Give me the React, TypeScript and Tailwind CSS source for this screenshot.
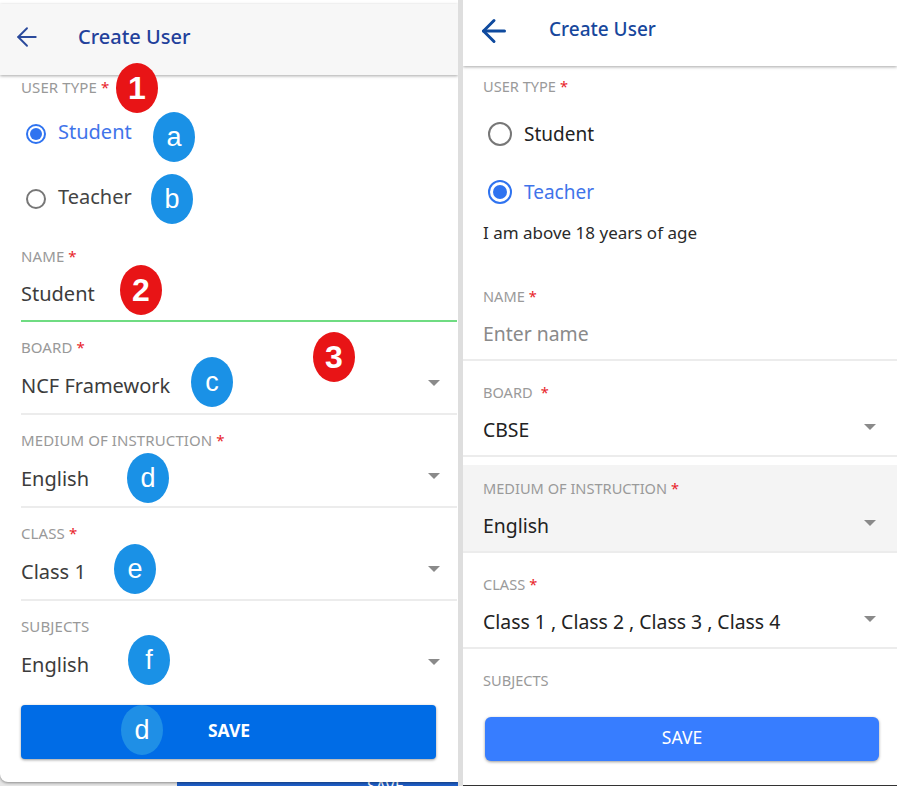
import { ArrowLeft } from "lucide-react";

function Star({ gap }: { gap?: boolean }) {
  return <span className={`text-[#e8232a] ${gap ? "ml-2" : "ml-1"}`}>*</span>;
}

function Radio({ on, size }: { on: boolean; size: "sm" | "lg" }) {
  const box = size === "sm" ? "w-5 h-5" : "w-6 h-6";
  const dot = size === "sm" ? "w-3 h-3" : "w-[14px] h-[14px]";
  const ring = on ? "border-[#2f73f0]" : "border-[#777777]";
  return (
    <span className={`${box} ${ring} rounded-full border-2 flex items-center justify-center bg-white shrink-0`}>
      {on && <span className={`${dot} rounded-full bg-[#2f73f0]`} />}
    </span>
  );
}

function Caret({ right }: { right: string }) {
  return (
    <span
      className={`absolute ${right} top-[6px] w-0 h-0 border-x-[6px] border-x-transparent border-t-[6px] border-t-[#8a8a8a]`}
    />
  );
}

function LeftField({ label, value, req = true }: { label: string; value: string; req?: boolean }) {
  return (
    <div className="h-[93px] pt-4 pb-4 ml-[21px] mr-px border-b-2 border-[#ececec]">
      <div className="text-[15px] leading-[18px] text-[#999999] tracking-[0.1px]">
        {label}
        {req && <Star />}
      </div>
      <div className="relative mt-[18px] h-6 text-[20px] leading-6 text-[#3c3c3c]">
        {value}
        <Caret right="right-[17px]" />
      </div>
    </div>
  );
}

function RightField({
  label,
  value,
  shaded,
  height,
  gap,
}: {
  label: string;
  value: string;
  shaded?: boolean;
  height: string;
  gap?: boolean;
}) {
  return (
    <div className={`${height} ${shaded ? "bg-[#f4f4f4] pt-[14px]" : "pt-[22px]"} pl-5 border-b-2 border-[#ececec]`}>
      <div className="text-[14.6px] leading-[18px] text-[#9a9a9a]">
        {label}
        <Star gap={gap} />
      </div>
      <div className="relative mt-[17px] h-6 text-[19.4px] leading-6 text-[#222222]">
        {value}
        <Caret right="right-[21px]" />
      </div>
    </div>
  );
}

function Badge({ text, x, y, red, pale }: { text: string; x: string; y: string; red?: boolean; pale?: boolean }) {
  const color = red ? "bg-[#e81416]" : pale ? "bg-[#1f8fe6]" : "bg-[#1a91e6]";
  return (
    <div
      className={`absolute ${x} ${y} w-[42px] h-[50px] rounded-[50%] ${color} flex items-center justify-center text-white font-['Liberation_Sans',sans-serif] ${red ? "text-[32px] font-bold" : "text-[27px]"}`}
    >
      {text}
    </div>
  );
}

function LeftPanel() {
  return (
    <div className="relative w-[458px] h-[786px] overflow-hidden bg-[#e6e6e6] shrink-0">
      {/* the next screen peeks out under the card */}
      <div className="absolute left-[177px] right-0 bottom-0 h-2 bg-[#1f5fc8] text-white text-[16px] leading-[16px] pl-[190px]">
        SAVE
      </div>
      <div className="relative h-[782px] bg-white rounded-bl-lg shadow-[0_1px_3px_rgba(0,0,0,0.4)] pt-1">
        <div className="h-[71px] bg-[#f7f7f7] shadow-[0_1px_3px_rgba(0,0,0,0.35)] flex items-center pl-3 pb-[5px]">
          <ArrowLeft className="w-[30px] h-[30px] text-[#2b4a9c]" strokeWidth={1.5} />
          <span className="ml-9 text-[20px] font-medium text-[#22409b]">Create User</span>
        </div>
        <div className="ml-[21px] mt-[3px] text-[15px] leading-[18px] text-[#999999] tracking-[0.1px]">
          USER TYPE
          <Star />
        </div>
        <div className="flex items-center gap-3 ml-[26px] mt-[26px] h-6 text-[20px] text-[#3f74ea]">
          <Radio on size="sm" />
          <span className="-mt-[4px]">Student</span>
        </div>
        <div className="flex items-center gap-3 ml-[26px] mt-[41px] h-6 text-[20px] text-[#444444]">
          <Radio on={false} size="sm" />
          <span className="-mt-[5px]">Teacher</span>
        </div>
        <div className="h-[111px] pt-9 ml-[21px] mr-px border-b-2 border-[#6fdc82]">
          <div className="text-[15px] leading-[18px] text-[#999999] tracking-[0.1px]">
            NAME
            <Star />
          </div>
          <div className="mt-[17px] h-6 text-[20px] leading-6 text-[#3c3c3c]">Student</div>
        </div>
        <LeftField label="BOARD" value="NCF Framework" />
        <LeftField label="MEDIUM OF INSTRUCTION" value="English" />
        <LeftField label="CLASS" value="Class 1" />
        <div className="h-[104px] pt-4 ml-[21px] mr-px">
          <div className="text-[15px] leading-[18px] text-[#999999] tracking-[0.1px]">SUBJECTS</div>
          <div className="relative mt-[18px] h-6 text-[20px] leading-6 text-[#3c3c3c]">
            English
            <Caret right="right-[17px]" />
          </div>
        </div>
        <button className="block ml-[21px] w-[415px] h-[54px] rounded bg-[#006ce6] shadow-[0_1px_3px_rgba(0,0,0,0.4)] text-white text-[17.5px] font-bold pl-px pb-[3px]">
          SAVE
        </button>

        {/* Callouts */}
        <Badge text="1" x="left-[116px]" y="top-[63px]" red />
        <Badge text="a" x="left-[153px]" y="top-[112px]" />
        <Badge text="b" x="left-[151px]" y="top-[174px]" />
        <Badge text="2" x="left-[120px]" y="top-[265px]" red />
        <Badge text="3" x="left-[313px]" y="top-[332px]" red />
        <Badge text="c" x="left-[191px]" y="top-[357px]" />
        <Badge text="d" x="left-[127px]" y="top-[453px]" />
        <Badge text="e" x="left-[114px]" y="top-[544px]" />
        <Badge text="f" x="left-[128px]" y="top-[635px]" />
        <Badge text="d" x="left-[121px]" y="top-[705px]" pale />
      </div>
    </div>
  );
}

function RightPanel() {
  return (
    <div className="w-[434px] h-[786px] overflow-hidden bg-white border-b border-[#333333] shrink-0">
      <div className="h-[66px] bg-white shadow-[0_1px_3px_rgba(0,0,0,0.35)] flex items-center pl-[13px] pb-[5px]">
        <ArrowLeft className="w-9 h-9 text-[#0f4a9e]" strokeWidth={2} />
        <span className="ml-[37px] -mt-[3px] text-[19px] font-medium text-[#17479c]">Create User</span>
      </div>
      <div className="ml-5 mt-[11px] text-[14.6px] leading-[18px] text-[#9a9a9a]">
        USER TYPE
        <Star />
      </div>
      <div className="flex items-center gap-3 ml-[25px] mt-[27px] h-6 text-[19px] text-[#222222]">
        <Radio on={false} size="lg" />
        <span>Student</span>
      </div>
      <div className="flex items-center gap-3 ml-[25px] mt-[34px] h-6 text-[19px] text-[#3f74ea]">
        <Radio on size="lg" />
        <span>Teacher</span>
      </div>
      <div className="ml-5 mt-[17px] h-6 text-[17px] leading-6 text-[#2a2a2a]">I am above 18 years of age</div>
      <div className="h-[116px] pt-[42px] pl-5 border-b-2 border-[#ececec]">
        <div className="text-[14.6px] leading-[18px] text-[#9a9a9a]">
          NAME
          <Star />
        </div>
        <div className="mt-[17px] h-6 text-[19.4px] leading-6 text-[#8a8a8a]">Enter name</div>
      </div>
      <RightField label="BOARD" value="CBSE" height="h-[96px]" gap />
      <div className="h-2" />
      <RightField label="MEDIUM OF INSTRUCTION" value="English" shaded height="h-[88px]" />
      <RightField label="CLASS" value="Class 1 , Class 2 , Class 3 , Class 4" height="h-[96px]" />
      <div className="pl-5 pt-[22px] text-[14.6px] leading-[18px] text-[#9a9a9a]">SUBJECTS</div>
      <button className="block ml-[22px] mt-[28px] w-[394px] h-[44px] rounded-md bg-[#377dff] shadow-[0_1px_3px_rgba(0,0,0,0.4)] text-white text-[17.5px] pb-1">
        SAVE
      </button>
    </div>
  );
}

export default function App() {
  return (
    <div className="w-[900px] h-[786px] flex bg-white overflow-hidden font-['Noto_Sans',sans-serif]">
      <LeftPanel />
      <div className="w-[5px] bg-[#dedede] shrink-0" />
      <RightPanel />
    </div>
  );
}
